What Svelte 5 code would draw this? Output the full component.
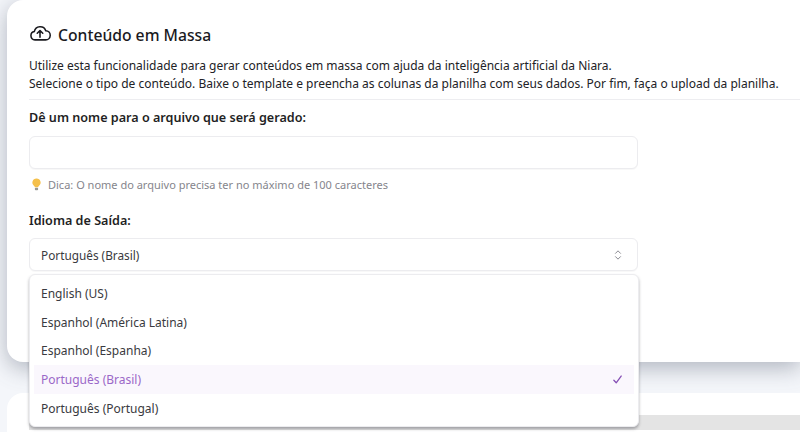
<script lang="ts">
	const LANGUAGES = [
		'English (US)',
		'Espanhol (América Latina)',
		'Espanhol (Espanha)',
		'Português (Brasil)',
		'Português (Portugal)',
	];

	let selected = $state('Português (Brasil)');
</script>

<div class="page">
	<section class="card">
		<h1 class="title">
			<svg class="cloud" viewBox="0 0 24 24" fill="none" stroke="currentColor" stroke-width="1.7" stroke-linecap="round" stroke-linejoin="round" aria-hidden="true">
				<path d="M6.5 19.5a4.6 4.6 0 0 1-.7-9.1 6.5 6.5 0 0 1 12.5-.9 5 5 0 0 1-.3 10z"/>
				<path d="M12 16.5V9.5M9 12.3l3-3 3 3"/>
			</svg>
			Conteúdo em Massa
		</h1>
		<p class="intro">
			Utilize esta funcionalidade para gerar conteúdos em massa com ajuda da inteligência artificial da Niara.<br />
			Selecione o tipo de conteúdo. Baixe o template e preencha as colunas da planilha com seus dados. Por fim, faça o upload da planilha.
		</p>

		<label class="label" for="file-name">Dê um nome para o arquivo que será gerado:</label>
		<input id="file-name" class="field" type="text" />
		<p class="hint">
			<svg class="bulb" viewBox="0 0 12 14" aria-hidden="true">
				<path d="M6 .5a4.4 4.4 0 0 0-2.6 8c.5.4.7.9.8 1.5h3.6c.1-.6.3-1.1.8-1.5A4.4 4.4 0 0 0 6 .5z" fill="#f5c04a"/>
				<rect x="4.2" y="10.6" width="3.6" height="2.6" rx="1" fill="#9a9a94"/>
			</svg>
			Dica: O nome do arquivo precisa ter no máximo de 100 caracteres
		</p>

		<span class="label lang-label">Idioma de Saída:</span>
		<div class="select-wrap">
			<button class="field select" type="button">
				{selected}
				<svg class="chevrons" viewBox="0 0 12 14" fill="none" stroke="currentColor" stroke-width="1.2" stroke-linecap="round" stroke-linejoin="round" aria-hidden="true">
					<path d="M3 5l3-3 3 3M3 9l3 3 3-3"/>
				</svg>
			</button>
			<ul class="menu">
				{#each LANGUAGES as lang}
					<li class="option" class:active={lang === selected}>
						{lang}
						{#if lang === selected}
							<svg class="check" viewBox="0 0 12 12" fill="none" stroke="currentColor" stroke-width="1.4" stroke-linecap="round" stroke-linejoin="round" aria-hidden="true">
								<path d="M2 6.8l2.6 2.8L10 2.2"/>
							</svg>
						{/if}
					</li>
				{/each}
			</ul>
		</div>
	</section>

	<section class="card-next">
		<div class="next-band"></div>
	</section>
</div>

<style>
	:global(body) {
		margin: 0;
	}

	.page {
		height: 432px;
		overflow: hidden;
		box-sizing: border-box;
		padding-left: 7px;
		background: #f4f6fa;
		font-family: "Noto Sans", "Open Sans", sans-serif;
		color: #222226;
	}

	.card {
		height: 362px;
		box-sizing: border-box;
		padding: 22px 0 0 22px;
		background: #fff;
		border-radius: 16px 0 0 16px;
		box-shadow: 0 6px 22px rgba(80, 90, 110, 0.42);
	}

	.title {
		display: flex;
		align-items: center;
		gap: 7px;
		margin: 0;
		height: 26px;
		font-size: 15.7px;
		font-weight: 500;
		color: #1a1a1e;
	}

	.cloud {
		width: 22px;
		height: 22px;
		margin-top: -4px;
	}

	.intro {
		margin: 9px 0 0;
		font-size: 12px;
		line-height: 18px;
		padding-bottom: 6px;
		border-bottom: 1px solid #ededf0;
	}

	.label {
		display: block;
		margin-top: 9px;
		font-size: 12.6px;
		line-height: 18px;
		font-weight: 600;
		color: #1f1f24;
	}

	.field {
		display: block;
		width: 609px;
		height: 33px;
		box-sizing: border-box;
		margin-top: 9px;
		background: #fff;
		border: 1px solid #ececef;
		border-radius: 6px;
		outline: none;
		box-shadow: 0 1px 1px rgba(0, 0, 0, 0.03);
	}

	.hint {
		display: flex;
		align-items: center;
		gap: 6px;
		margin: 6px 0 0 2px;
		height: 18px;
		font-size: 11px;
		color: #85858c;
	}

	.bulb {
		width: 11px;
		height: 13px;
	}

	.lang-label {
		margin-top: 19px;
	}

	.select-wrap {
		position: relative;
	}

	.select {
		display: flex;
		align-items: center;
		justify-content: space-between;
		padding: 0 14px 0 11px;
		margin-top: 8px;
		font: inherit;
		font-size: 11.8px;
		color: #3a3a40;
		text-align: left;
	}

	.chevrons {
		width: 10px;
		height: 12px;
		color: #8b8b92;
	}

	/* opened list, lies over the rest of the page */
	.menu {
		position: absolute;
		z-index: 1;
		top: 36px;
		left: 0;
		width: 610px;
		height: 153px;
		box-sizing: border-box;
		margin: 0;
		padding: 4px 4px 0;
		list-style: none;
		background: #fff;
		border: 1px solid #ececef;
		border-radius: 6px;
		box-shadow: 0 2px 3px rgba(60, 60, 70, 0.4);
	}

	.option {
		display: flex;
		align-items: center;
		justify-content: space-between;
		height: 28.8px;
		padding: 0 11px 0 7px;
		font-size: 12px;
		color: #3a3a40;
	}

	.option.active {
		background: #faf7fd;
		color: #9a68c8;
	}

	.check {
		width: 11px;
		height: 11px;
		color: #8650b5;
	}

	.card-next {
		height: 60px;
		margin-top: 31px;
		padding: 22px 0 0 22px;
		background: #fff;
		border-top-left-radius: 16px;
	}

	.next-band {
		height: 15px;
		background: #e4e4e4;
	}
</style>
